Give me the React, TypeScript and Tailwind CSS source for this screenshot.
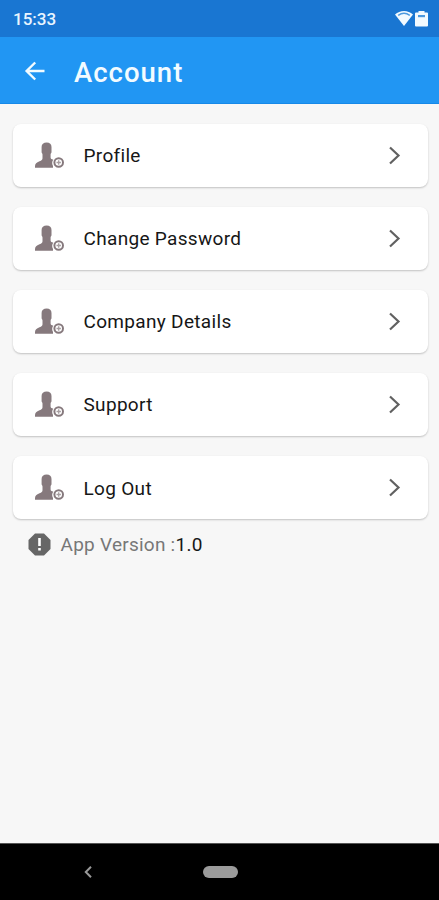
const items = ["Profile", "Change Password", "Company Details", "Support", "Log Out"];

function PersonIcon() {
  return (
    <svg className="h-[28px] w-[32px] shrink-0" viewBox="0 0 32 28" fill="none">
      <path
        d="M12.700 .6C9.500 .6 7.600 2.300 7.600 5v5.200c0 .9.900 1.300.9 2.200v3.800c0 1.500-1 2.200-3 3C2.500 20.400 1 21.800 1 24.200v1.600h18V24c-1.300-2.100-1-4.700.3-6.200-1.700-.6-2.700-1-2.700-2.300v-3.100c0-.9.900-1.300.9-2.200V5C17.500 2.300 15.800 .6 12.700 .6z"
        fill="#86797d"
      />
      <circle cx="24.700" cy="20.500" r="4.300" stroke="#86797d" strokeWidth="2" fill="#fff" />
      <path d="M24.700 18.300v4.400M22.500 20.500h4.400" stroke="#a89fa2" strokeWidth="1.300" />
    </svg>
  );
}

function MenuCard({ label }: { label: string }) {
  return (
    <button className="flex h-[63px] w-full items-center rounded-[8px] bg-white pt-px pr-[26px] pl-[21px] text-left shadow-[0_1px_2px_rgba(0,0,0,0.22)]">
      <PersonIcon />
      <span className="ml-[17.500px] flex-1 pt-[1px] text-[19px] leading-[24px] tracking-[0.320px] text-[#161616]">{label}</span>
      <svg className="h-[20px] w-[14px]" viewBox="0 0 14 20" fill="none">
        <path d="M2 1.500l8.500 8L2 17.500" stroke="#616161" strokeWidth="2.200" />
      </svg>
    </button>
  );
}

export default function App() {
  return (
    <div className="flex h-[900px] w-[439px] flex-col overflow-hidden bg-[#f7f7f7] font-[Roboto,sans-serif]">
      <div className="flex h-[37px] shrink-0 items-center justify-between bg-[#1976d2] pr-[11px] pl-[13px] text-[#e9f5ff]">
        <span className="pt-[2px] text-[17px] font-medium">15:33</span>
        <div className="flex items-center gap-[2px]">
          <svg className="h-[17px] w-[18px]" viewBox="0 0 18 17" fill="none">
            <path d="M0 4.500C5-.2 13-.2 18 4.500L9 16z" fill="#f2faff" />
            <path d="M3.200 5.400C6.800 2.800 11.200 2.800 14.800 5.400" stroke="#4b99df" strokeWidth="1.500" />
          </svg>
          <svg className="h-[17px] w-[13px]" viewBox="0 0 13 17">
            <path d="M3.500 1h6v1.500H12a1 1 0 011 1V15.500a1 1 0 01-1 1H1a1 1 0 01-1-1V3.500a1 1 0 011-1h2.500z" fill="#f2faff" />
            <path d="M3 5h7v2.200H3z" fill="#4b99df" />
          </svg>
        </div>
      </div>
      <header className="flex h-[67px] shrink-0 items-center border-b border-[#1689e8] bg-[#2196f3] pt-[2px] pl-[24px] text-[#f2fbff]">
        <svg className="h-[20px] w-[22px]" viewBox="0 0 22 20" fill="none">
          <path d="M20.500 10H3M11.200 1.500L2.600 10l8.600 8.500" stroke="currentColor" strokeWidth="2.400" />
        </svg>
        <h1 className="ml-[28px] pt-[3px] text-[27.500px] leading-[32px] font-medium tracking-[1px]">Account</h1>
      </header>
      <main className="flex-1 pt-[19.500px] pr-[11px] pl-[13px]">
        <div className="flex flex-col gap-[20.150px]">
          {items.map((label) => (
            <MenuCard key={label} label={label} />
          ))}
        </div>
        <div className="mt-[13.500px] flex h-[24px] items-center pl-[15px]">
          <svg className="h-[23px] w-[23px]" viewBox="0 0 23 23">
            <path d="M7 .5h9L22.500 7v9L16 22.500H7L.5 16V7z" fill="#666" />
            <path d="M10.200 5h2.600v8h-2.600zM10.200 15h2.600v2.600h-2.600z" fill="#fff" />
          </svg>
          <span className="ml-[9.500px] text-[19px] leading-[24px] tracking-[0.250px] text-[#777]">
            App Version :<span className="text-[#161616]">1.0</span>
          </span>
        </div>
      </main>
      <nav className="flex h-[57px] shrink-0 items-center border-t border-[#555] bg-black pl-[84px]">
        <svg className="h-[12px] w-[8px]" viewBox="0 0 8 12" fill="none">
          <path d="M7 .8L1.800 6 7 11.200" stroke="#999" strokeWidth="2" />
        </svg>
        <div className="ml-[111px] h-[12px] w-[35px] rounded-full bg-[#9b9b9b]" />
      </nav>
    </div>
  );
}
